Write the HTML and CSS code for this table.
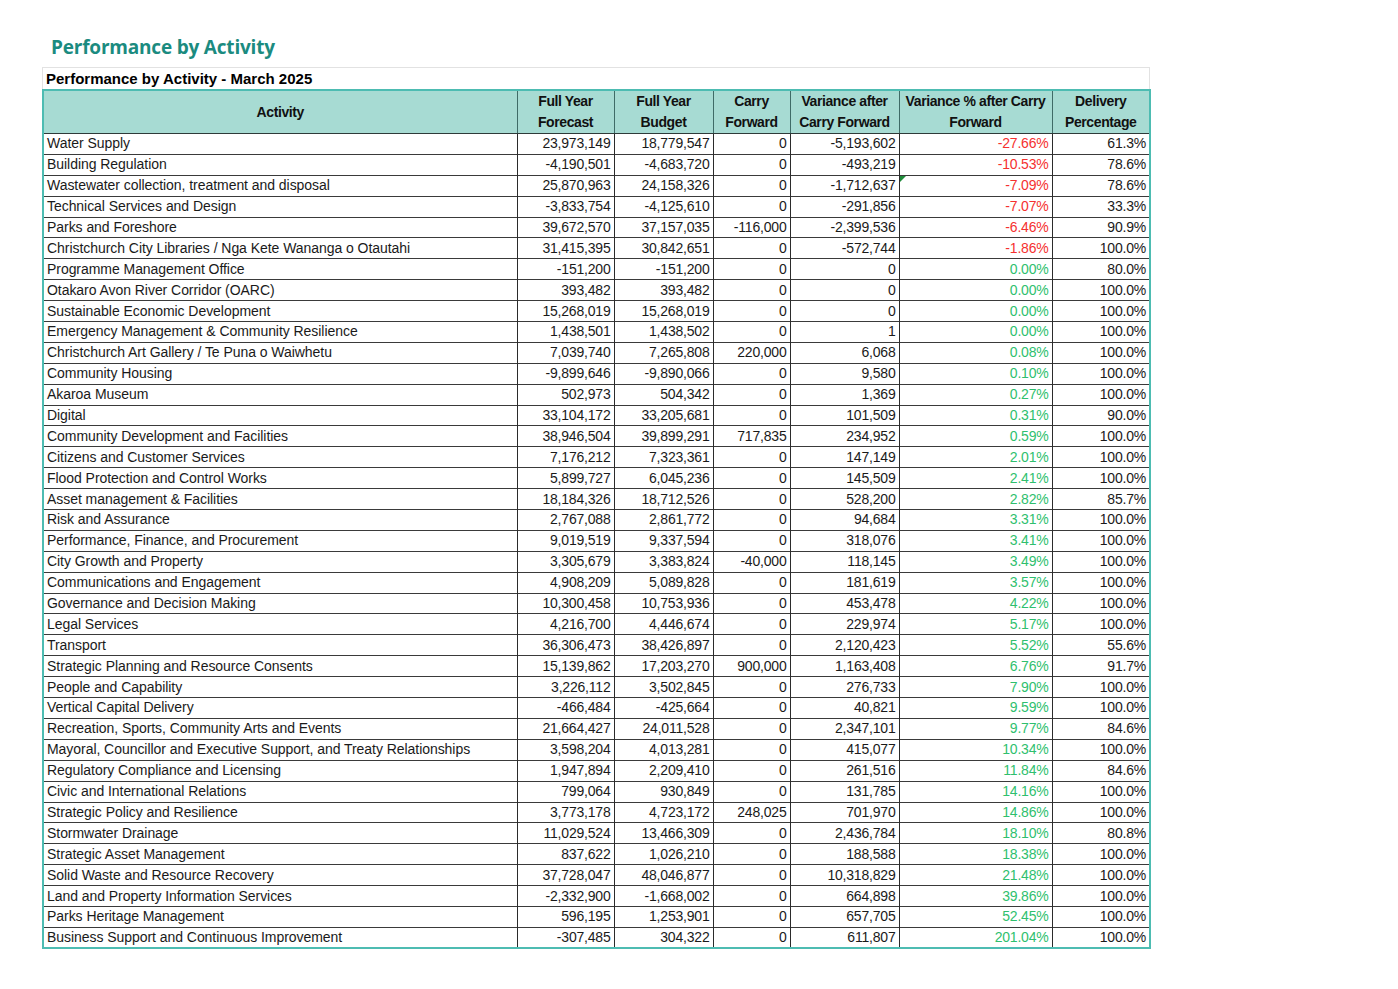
FILE: index.html
```html
<!DOCTYPE html>
<html>
<head>
<meta charset="utf-8">
<link rel="stylesheet" href="styles.css">
</head>
<body>
<h1 class="page-title">Performance by Activity</h1>
<div class="report">
  <div class="report-caption">Performance by Activity - March 2025</div>
  <table class="perf">
    <colgroup>
      <col class="c-act"><col class="c-fc"><col class="c-bu"><col class="c-cf"><col class="c-va"><col class="c-vp"><col class="c-dp">
    </colgroup>
    <thead>
      <tr>
        <th>Activity</th>
        <th>Full Year<br>Forecast</th>
        <th>Full Year<br>Budget</th>
        <th>Carry<br>Forward</th>
        <th>Variance after<br>Carry Forward</th>
        <th>Variance % after Carry<br>Forward</th>
        <th>Delivery<br>Percentage</th>
      </tr>
    </thead>
    <tbody>
      <tr><td>Water Supply</td><td>23,973,149</td><td>18,779,547</td><td>0</td><td>-5,193,602</td><td class="neg">-27.66%</td><td>61.3%</td></tr>
      <tr><td>Building Regulation</td><td>-4,190,501</td><td>-4,683,720</td><td>0</td><td>-493,219</td><td class="neg">-10.53%</td><td>78.6%</td></tr>
      <tr><td>Wastewater collection, treatment and disposal</td><td>25,870,963</td><td>24,158,326</td><td>0</td><td>-1,712,637</td><td class="neg flag">-7.09%</td><td>78.6%</td></tr>
      <tr><td>Technical Services and Design</td><td>-3,833,754</td><td>-4,125,610</td><td>0</td><td>-291,856</td><td class="neg">-7.07%</td><td>33.3%</td></tr>
      <tr><td>Parks and Foreshore</td><td>39,672,570</td><td>37,157,035</td><td>-116,000</td><td>-2,399,536</td><td class="neg">-6.46%</td><td>90.9%</td></tr>
      <tr><td>Christchurch City Libraries / Nga Kete Wananga o Otautahi</td><td>31,415,395</td><td>30,842,651</td><td>0</td><td>-572,744</td><td class="neg">-1.86%</td><td>100.0%</td></tr>
      <tr><td>Programme Management Office</td><td>-151,200</td><td>-151,200</td><td>0</td><td>0</td><td class="pos">0.00%</td><td>80.0%</td></tr>
      <tr><td>Otakaro Avon River Corridor (OARC)</td><td>393,482</td><td>393,482</td><td>0</td><td>0</td><td class="pos">0.00%</td><td>100.0%</td></tr>
      <tr><td>Sustainable Economic Development</td><td>15,268,019</td><td>15,268,019</td><td>0</td><td>0</td><td class="pos">0.00%</td><td>100.0%</td></tr>
      <tr><td>Emergency Management &amp; Community Resilience</td><td>1,438,501</td><td>1,438,502</td><td>0</td><td>1</td><td class="pos">0.00%</td><td>100.0%</td></tr>
      <tr><td>Christchurch Art Gallery / Te Puna o Waiwhetu</td><td>7,039,740</td><td>7,265,808</td><td>220,000</td><td>6,068</td><td class="pos">0.08%</td><td>100.0%</td></tr>
      <tr><td>Community Housing</td><td>-9,899,646</td><td>-9,890,066</td><td>0</td><td>9,580</td><td class="pos">0.10%</td><td>100.0%</td></tr>
      <tr><td>Akaroa Museum</td><td>502,973</td><td>504,342</td><td>0</td><td>1,369</td><td class="pos">0.27%</td><td>100.0%</td></tr>
      <tr><td>Digital</td><td>33,104,172</td><td>33,205,681</td><td>0</td><td>101,509</td><td class="pos">0.31%</td><td>90.0%</td></tr>
      <tr><td>Community Development and Facilities</td><td>38,946,504</td><td>39,899,291</td><td>717,835</td><td>234,952</td><td class="pos">0.59%</td><td>100.0%</td></tr>
      <tr><td>Citizens and Customer Services</td><td>7,176,212</td><td>7,323,361</td><td>0</td><td>147,149</td><td class="pos">2.01%</td><td>100.0%</td></tr>
      <tr><td>Flood Protection and Control Works</td><td>5,899,727</td><td>6,045,236</td><td>0</td><td>145,509</td><td class="pos">2.41%</td><td>100.0%</td></tr>
      <tr><td>Asset management &amp; Facilities</td><td>18,184,326</td><td>18,712,526</td><td>0</td><td>528,200</td><td class="pos">2.82%</td><td>85.7%</td></tr>
      <tr><td>Risk and Assurance</td><td>2,767,088</td><td>2,861,772</td><td>0</td><td>94,684</td><td class="pos">3.31%</td><td>100.0%</td></tr>
      <tr><td>Performance, Finance, and Procurement</td><td>9,019,519</td><td>9,337,594</td><td>0</td><td>318,076</td><td class="pos">3.41%</td><td>100.0%</td></tr>
      <tr><td>City Growth and Property</td><td>3,305,679</td><td>3,383,824</td><td>-40,000</td><td>118,145</td><td class="pos">3.49%</td><td>100.0%</td></tr>
      <tr><td>Communications and Engagement</td><td>4,908,209</td><td>5,089,828</td><td>0</td><td>181,619</td><td class="pos">3.57%</td><td>100.0%</td></tr>
      <tr><td>Governance and Decision Making</td><td>10,300,458</td><td>10,753,936</td><td>0</td><td>453,478</td><td class="pos">4.22%</td><td>100.0%</td></tr>
      <tr><td>Legal Services</td><td>4,216,700</td><td>4,446,674</td><td>0</td><td>229,974</td><td class="pos">5.17%</td><td>100.0%</td></tr>
      <tr><td>Transport</td><td>36,306,473</td><td>38,426,897</td><td>0</td><td>2,120,423</td><td class="pos">5.52%</td><td>55.6%</td></tr>
      <tr><td>Strategic Planning and Resource Consents</td><td>15,139,862</td><td>17,203,270</td><td>900,000</td><td>1,163,408</td><td class="pos">6.76%</td><td>91.7%</td></tr>
      <tr><td>People and Capability</td><td>3,226,112</td><td>3,502,845</td><td>0</td><td>276,733</td><td class="pos">7.90%</td><td>100.0%</td></tr>
      <tr><td>Vertical Capital Delivery</td><td>-466,484</td><td>-425,664</td><td>0</td><td>40,821</td><td class="pos">9.59%</td><td>100.0%</td></tr>
      <tr><td>Recreation, Sports, Community Arts and Events</td><td>21,664,427</td><td>24,011,528</td><td>0</td><td>2,347,101</td><td class="pos">9.77%</td><td>84.6%</td></tr>
      <tr><td>Mayoral, Councillor and Executive Support, and Treaty Relationships</td><td>3,598,204</td><td>4,013,281</td><td>0</td><td>415,077</td><td class="pos">10.34%</td><td>100.0%</td></tr>
      <tr><td>Regulatory Compliance and Licensing</td><td>1,947,894</td><td>2,209,410</td><td>0</td><td>261,516</td><td class="pos">11.84%</td><td>84.6%</td></tr>
      <tr><td>Civic and International Relations</td><td>799,064</td><td>930,849</td><td>0</td><td>131,785</td><td class="pos">14.16%</td><td>100.0%</td></tr>
      <tr><td>Strategic Policy and Resilience</td><td>3,773,178</td><td>4,723,172</td><td>248,025</td><td>701,970</td><td class="pos">14.86%</td><td>100.0%</td></tr>
      <tr><td>Stormwater Drainage</td><td>11,029,524</td><td>13,466,309</td><td>0</td><td>2,436,784</td><td class="pos">18.10%</td><td>80.8%</td></tr>
      <tr><td>Strategic Asset Management</td><td>837,622</td><td>1,026,210</td><td>0</td><td>188,588</td><td class="pos">18.38%</td><td>100.0%</td></tr>
      <tr><td>Solid Waste and Resource Recovery</td><td>37,728,047</td><td>48,046,877</td><td>0</td><td>10,318,829</td><td class="pos">21.48%</td><td>100.0%</td></tr>
      <tr><td>Land and Property Information Services</td><td>-2,332,900</td><td>-1,668,002</td><td>0</td><td>664,898</td><td class="pos">39.86%</td><td>100.0%</td></tr>
      <tr><td>Parks Heritage Management</td><td>596,195</td><td>1,253,901</td><td>0</td><td>657,705</td><td class="pos">52.45%</td><td>100.0%</td></tr>
      <tr><td>Business Support and Continuous Improvement</td><td>-307,485</td><td>304,322</td><td>0</td><td>611,807</td><td class="pos">201.04%</td><td>100.0%</td></tr>
    </tbody>
  </table>
</div>
</body>
</html>
```

FILE: styles.css
```css
html, body {
  margin: 0;
  padding: 0;
  background: #ffffff;
}

body {
  font-family: "Liberation Sans", Arial, sans-serif;
  color: #111;
}

.page-title {
  margin: 0;
  padding: 34px 0 0 51px;
  height: 33px;
  box-sizing: content-box;
  font-family: "Open Sans", "Noto Sans", sans-serif;
  font-weight: 700;
  font-size: 19px;
  line-height: 26px;
  color: #1b8b80;
  letter-spacing: -0.2px;
}

.report {
  margin-left: 42px;
  width: 1108px;
  border-top: 1px solid #e2e2e2;
  border-left: 1px solid #e2e2e2;
  border-right: 1px solid #e2e2e2;
  box-sizing: border-box;
  overflow: visible;
}

.report-caption {
  height: 21px;
  line-height: 22px;
  padding-left: 3px;
  font-weight: 700;
  font-size: 15px;
  color: #000;
}

.perf {
  border-collapse: collapse;
  table-layout: fixed;
  width: 1107px;
  margin-left: -1px;
  border: 2px solid #4dbcb2;
  font-size: 14px;
}

.c-act { width: 474px; }
.c-fc { width: 97px; }
.c-bu { width: 99px; }
.c-cf { width: 77px; }
.c-va { width: 109px; }
.c-vp { width: 153px; }
.c-dp { width: 98px; }

.perf th {
  background: #a7dbd3;
  font-weight: 700;
  font-size: 14px;
  line-height: 21px;
  padding: 0 2px;
  text-align: center;
  color: #111;
  border-left: 1px solid #3f6b67;
  border-bottom: 1px solid #2e3a39;
  letter-spacing: -0.4px;
  white-space: nowrap;
}

.perf th:first-child {
  border-left: none;
}

.perf tbody tr {
  height: 20.9px;
}

.perf td {
  padding: 0 3px 0 4px;
  line-height: 19px;
  text-align: right;
  border-top: 1px solid #3a3a3a;
  border-left: 1px solid #2b2b2b;
  white-space: nowrap;
  color: #1a1a1a;
  position: relative;
  letter-spacing: -0.2px;
}

.perf tbody tr:first-child td {
  border-top: none;
}

.perf td:first-child {
  text-align: left;
  border-left: none;
  padding-left: 3px;
  letter-spacing: -0.05px;
}

.perf td.neg {
  color: #f5312f;
}

.perf td.pos {
  color: #2fbf6e;
}

.perf td.flag::before {
  content: "";
  position: absolute;
  left: 0;
  top: 0;
  border-top: 6px solid #1f8b3a;
  border-right: 6px solid transparent;
}
```
